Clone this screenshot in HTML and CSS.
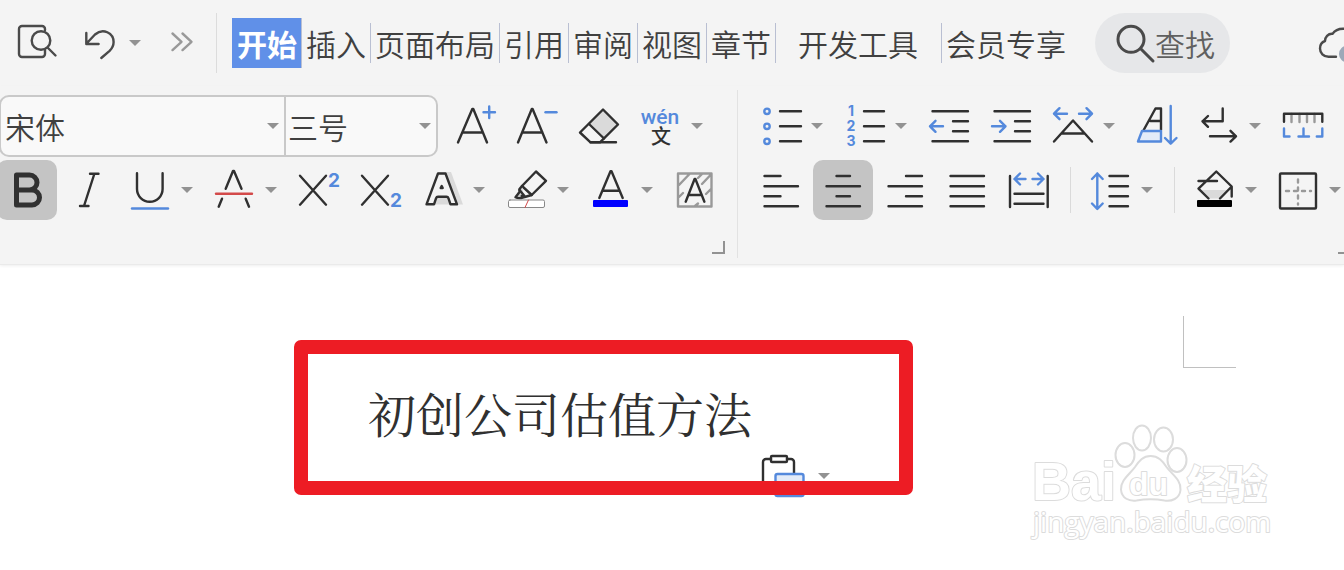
FILE: index.html
```html
<!DOCTYPE html>
<html lang="zh-CN">
<head>
  <meta charset="UTF-8" />
  <meta name="viewport" content="width=device-width, initial-scale=1.0" />
  <title>初创公司估值方法</title>
  <link rel="stylesheet" href="styles.css">
</head>
<body>
  <header class="topbar">
    <button class="tool" aria-label="打印预览">
      <svg class="icon" viewBox="0 0 40 40"><path d="M28 7V6a3 3 0 0 0-3-3H5a3 3 0 0 0-3 3v25a3 3 0 0 0 3 3h20a3 3 0 0 0 3-3v-4"/><circle cx="24" cy="17.5" r="9.3"/><path d="M31 25l7.500 7.500"/></svg>
    </button>
    <button class="tool has-caret" aria-label="撤销">
      <svg class="icon" viewBox="0 0 40 40"><path d="M7.300 10v11h12.300M7.500 20.500L16 11.500C24 4.500 34.600 10 34.600 19c0 4-1.600 6.500-4 8.800L22.300 35"/></svg>
      <span class="caret"></span>
    </button>
    <button class="tool muted" aria-label="更多">
      <svg class="icon" viewBox="0 0 40 40"><path d="M9.500 10.500l9 8.300-9 8.300M19.500 10.500l9 8.300-9 8.300"/></svg>
    </button>
    <nav class="tabs">
      <a href="#" class="active">开始</a>
      <a href="#">插入</a>
      <a href="#">页面布局</a>
      <a href="#">引用</a>
      <a href="#">审阅</a>
      <a href="#">视图</a>
      <a href="#">章节</a>
      <a href="#" class="wide">开发工具</a>
      <a href="#" class="last">会员专享</a>
    </nav>
    <label class="search">
      <svg class="icon" viewBox="0 0 40 40"><g stroke-width="3"><circle cx="16" cy="16.300" r="13"/><path d="M26 26l12 12"/></g></svg>
      <input type="text" placeholder="查找" aria-label="查找">
    </label>
    <button class="cloud" aria-label="云同步">
      <svg class="icon" viewBox="0 0 40 40"><path d="M17 33.700H9.500C4.500 33.700 1 30 1 25.500c0-3.500 2-6.500 5-7.500 0-4 3-7.500 7.500-7.200C16 7 20.500 5.500 25 5.700"/><circle class="dot" cx="28.500" cy="31" r="8.500"/></svg>
    </button>
  </header>

  <div class="ribbon">
    <section class="group font-group">
      <div class="row">
        <div class="fields">
          <div class="field field-font">
            <select aria-label="字体"><option>宋体</option><option>黑体</option></select>
            <span class="caret"></span>
          </div>
          <div class="field field-size">
            <select aria-label="字号"><option>三号</option><option>四号</option></select>
            <span class="caret"></span>
          </div>
        </div>
        <button class="tool" aria-label="增大字号">
          <svg class="icon" viewBox="0 0 40 40"><path d="M3 36.500L17.300 3h1L32 36.500M7.500 26.500h20"/><path class="blue" d="M28.500 6.300h11.500M34.200.500v11.500"/></svg>
        </button>
        <button class="tool" aria-label="减小字号">
          <svg class="icon" viewBox="0 0 40 40"><path d="M1 36.500L14.800 3h.800L29.500 36.500M5.500 26.500h20"/><path class="blue" d="M28.500 6.300H39.500"/></svg>
        </button>
        <button class="tool" aria-label="清除格式">
          <svg class="icon" viewBox="0 0 40 40"><path class="tint" d="M24 3.500l15 15L25 33 10 18z"/><path d="M24 3.500l15 15L21 36.300H11.500L1 26.500z"/><path d="M10 18l15 14.500M11.500 36.300H37"/></svg>
        </button>
        <button class="tool has-caret" aria-label="拼音指南">
          <svg class="icon" viewBox="0 0 40 40"><text class="pinyin" x="19" y="18">wén</text><text class="hanzi" x="20" y="38">文</text></svg>
          <span class="caret"></span>
        </button>
      </div>
      <div class="row row-format">
        <button class="tool pressed" aria-label="加粗">
          <svg class="icon" viewBox="0 0 40 40"><path stroke-width="5" d="M9.500 5H22.500a7.500 7.500 0 0 1 0 15H9.500zM9.500 20H25a7.500 7.500 0 0 1 0 15H9.500z"/></svg>
        </button>
        <button class="tool" aria-label="倾斜">
          <svg class="icon" viewBox="0 0 40 40"><path d="M21 3.700h8.500M11 36h8.500M25.300 4L15 36"/></svg>
        </button>
        <button class="tool has-caret" aria-label="下划线">
          <svg class="icon" viewBox="0 0 40 40"><path d="M6 3.300v15.700a12.800 12.800 0 0 0 25.600 0V3.300"/><path class="blue" d="M1 38.500h36"/></svg>
          <span class="caret"></span>
        </button>
        <button class="tool has-caret" aria-label="删除线">
          <svg class="icon" viewBox="0 0 40 40"><path d="M10.700 18.800L18 1h1l7.500 17.800M7 28.700l-3.300 8M30.700 28.700l3.300 8"/><path class="red" d="M1 23.700h36"/></svg>
          <span class="caret"></span>
        </button>
        <button class="tool" aria-label="上标">
          <svg class="icon" viewBox="0 0 40 40"><path d="M1 5.700l26 29M27 5.700l-26 29"/><text class="script" x="35" y="17">2</text></svg>
        </button>
        <button class="tool" aria-label="下标">
          <svg class="icon" viewBox="0 0 40 40"><path d="M1 5.700l26 29M27 5.700l-26 29"/><text class="script" x="35" y="37">2</text></svg>
        </button>
        <button class="tool has-caret" aria-label="文字效果">
          <svg class="icon" viewBox="0 0 40 40"><path class="tint" d="M15 2h13l12 32.500H11z"/><path class="paper" d="M3.500 34.300L15 3.500h7.500L34 34.300H27.500l-2-6q-.500-1.500-2-1.500h-8.500q-1.500 0-2 1.500l-2 6z"/><path d="M18.700 16l1 2h-2z"/></svg>
          <span class="caret"></span>
        </button>
        <button class="tool has-caret" aria-label="突出显示">
          <svg class="icon" viewBox="0 0 40 40"><path d="M29 1.500l10 9.300L24.700 25 15 16z"/><path class="shade" d="M15 16l-2.500 3v3l-4 5.300c2 1 5 1 8 0"/><path d="M12.500 20l5 6M24.700 25l-7 2-3-1"/><rect class="swatch" x="1.500" y="30" width="36" height="7.500" rx="1.500"/><path class="red thin" d="M21.500 30l-3.500 7.500"/></svg>
          <span class="caret"></span>
        </button>
        <button class="tool has-caret" aria-label="字体颜色">
          <svg class="icon" viewBox="0 0 40 40"><path d="M8.300 28L19.500 1.300h1L31.700 28M12 20.700h16"/><rect class="bar-blue" x="2" y="30" width="35" height="7" rx="1"/></svg>
          <span class="caret"></span>
        </button>
        <button class="tool" aria-label="字符底纹">
          <svg class="icon" viewBox="0 0 40 40"><path class="gray" d="M3 3.500h33.500v33H3zM4 15L14.500 4M4 27l4-4M23 8l4-4M27 14l9-9.500M31 24l5-5M20 36l3-2.500"/><path d="M10.700 31.700L19.600 9h.800l9 22.700M14 25h12"/></svg>
        </button>
      </div>
      <div class="group-foot"><button class="launcher" aria-label="字体设置"></button></div>
    </section>

    <section class="group para-group">
      <div class="row">
        <button class="tool has-caret" aria-label="项目符号">
          <svg class="icon" viewBox="0 0 40 40"><g class="blue"><circle cx="6" cy="5.300" r="2.700"/><circle cx="6" cy="20.300" r="2.700"/><circle cx="6" cy="35.300" r="2.700"/></g><path d="M19 5.300h21M19 20.300h21M19 35.300h21"/></svg>
          <span class="caret"></span>
        </button>
        <button class="tool has-caret" aria-label="编号">
          <svg class="icon" viewBox="0 0 40 40"><g class="digits"><text x="6" y="10">1</text><text x="6" y="25">2</text><text x="6" y="40">3</text></g><path d="M19 5.300h20M19 20.300h20M19 35.300h20"/></svg>
          <span class="caret"></span>
        </button>
        <button class="tool" aria-label="减少缩进">
          <svg class="icon" viewBox="0 0 40 40"><path d="M3.500 5.300H39M24 15.300h15M24 25.300h15M3.500 35.300H39"/><path class="blue" d="M14 20.300H1M6.500 14.800L1 20.300l5.500 5.500"/></svg>
        </button>
        <button class="tool" aria-label="增加缩进">
          <svg class="icon" viewBox="0 0 40 40"><path d="M3.500 5.300H39M24 15.300h15M24 25.300h15M3.500 35.300H39"/><path class="blue" d="M1 20.300h13.500M9 14.800l5.500 5.500L9 25.800"/></svg>
        </button>
        <button class="tool has-caret" aria-label="字符缩放">
          <svg class="icon" viewBox="0 0 40 40"><path d="M1 35.500L20 14.500l19 21M9 27.500h22"/><path class="blue" d="M14 7.700H1M6.500 2.200L1 7.700l5.500 5.500M26 7.700h13M33.500 2.200L39 7.700l-5.500 5.500"/></svg>
          <span class="caret"></span>
        </button>
        <button class="tool" aria-label="排序">
          <svg class="icon" viewBox="0 0 40 40"><path d="M6.700 24L18.500 2.500H24V24M13.500 15H24"/><path class="blue pale" d="M5 25h19v10.500H1z"/><path class="blue" d="M33.700 0v37.500M28 32l5.700 5.700L39.500 32"/></svg>
        </button>
        <button class="tool has-caret" aria-label="显示段落标记">
          <svg class="icon" viewBox="0 0 40 40"><path d="M23.700 2.500v12.800H3.500M9 10l-5.500 5.300L9 20.800M11 30.300h26M31.500 24.800l5.500 5.500-5.500 5.300"/></svg>
          <span class="caret"></span>
        </button>
        <button class="tool" aria-label="制表位">
          <svg class="icon" viewBox="0 0 40 40"><path class="gray" d="M8.500 8v8M16.500 8v8M24 8v8M31.500 8v8"/><path d="M1 15.700v-8h38.300v8"/><path class="blue" d="M1 22.500v8h5.500M20.500 22.500v8M15.500 30.500h10.500M39.300 22.500v8h-5.500"/></svg>
        </button>
      </div>
      <div class="row">
        <button class="tool" aria-label="左对齐">
          <svg class="icon" viewBox="0 0 40 40"><path d="M3.500 6h16M3.500 16.300h33.500M3.500 26.300h16M3.500 36.300h33.500"/></svg>
        </button>
        <button class="tool pressed" aria-label="居中对齐">
          <svg class="icon" viewBox="0 0 40 40"><path d="M13.500 6h13.500M3.500 16.300h33.500M13.500 26.300h13.500M3.500 36.300h33.500"/></svg>
        </button>
        <button class="tool" aria-label="右对齐">
          <svg class="icon" viewBox="0 0 40 40"><path d="M21 6h16M3.500 16.300h33.500M21 26.300h16M3.500 36.300h33.500"/></svg>
        </button>
        <button class="tool" aria-label="两端对齐">
          <svg class="icon" viewBox="0 0 40 40"><path d="M3.500 6h33.500M3.500 16.300h33.500M3.500 26.300h33.500M3.500 36.300h33.500"/></svg>
        </button>
        <button class="tool" aria-label="分散对齐">
          <svg class="icon" viewBox="0 0 40 40"><path d="M1 6v31M38.700 6v31M5.500 23.700h29M5.500 33.700h29"/><path class="blue" d="M16.500 9h-11M11 3.500L5.500 9l5.500 5.500M23.500 9h11M29 3.500L34.500 9 29 14.500"/></svg>
        </button>
        <span class="sep"></span>
        <button class="tool has-caret" aria-label="行距">
          <svg class="icon" viewBox="0 0 40 40"><path class="blue" d="M6.300 3.500v35M1 9l5.300-5.500L11.700 9M1 33.500L6.300 39l5.400-5.500"/><path d="M18.500 6H37M18.500 16.300H37M18.500 26.300H37M18.500 36.300H37"/></svg>
          <span class="caret"></span>
        </button>
        <span class="sep"></span>
        <button class="tool has-caret" aria-label="底纹颜色">
          <svg class="icon" viewBox="0 0 40 40"><path class="tint" d="M5 20h28l-9 8.500H13z"/><path d="M13.500 28.500L3.500 18.700 21.300 1.500l15.400 15v10M36.700 16.500L25 28.500M3.500 11H22"/><rect class="bar-black" x="2" y="30" width="35" height="7" rx="1"/></svg>
          <span class="caret"></span>
        </button>
        <button class="tool has-caret" aria-label="边框">
          <svg class="icon" viewBox="0 0 40 40"><rect x="1" y="3.500" width="36" height="35" rx="1"/><path class="gray" stroke-dasharray="3 5" d="M7 21H32"/><path class="gray" stroke-dasharray="3 5" d="M19 9.500v25"/></svg>
          <span class="caret"></span>
        </button>
      </div>
      <div class="group-foot"><button class="launcher" aria-label="段落设置"></button></div>
    </section>
  </div>

  <main class="document">
    <h1>初创公司估值方法</h1>
    <button class="paste" aria-label="粘贴选项">
      <svg class="paste-icon" viewBox="0 0 42 42"><path d="M9 4H4a3 3 0 0 0-3 3v24h12M25 4h4a3 3 0 0 1 3 3v12"/><rect x="9" y="1" width="16" height="6" rx="1"/><rect class="blue pale" x="13.500" y="19" width="28" height="22" rx="2"/></svg>
      <span class="caret"></span>
    </button>
    <div class="highlight-frame"></div>
    <div class="crop-mark"></div>
    <svg class="watermark" viewBox="0 0 250 122">
      <g class="paw">
        <ellipse cx="97" cy="35" rx="9.500" ry="12"/>
        <ellipse cx="114" cy="18" rx="9" ry="12.500"/>
        <ellipse cx="135.500" cy="19.500" rx="9.500" ry="12"/>
        <ellipse cx="149" cy="40" rx="9.500" ry="12"/>
        <path d="M122.500 36c8 0 12 5 16 11 5 7 15 13 14 23-1 9-9 11.500-16 10.500-9-1.500-19-1.500-28 0-7 1-15-2-15.500-11C92.500 60 102 54 107 47c4-6 8-11 15.500-11z"/>
      </g>
      <text class="mark-bai" x="4" y="80">Bai</text>
      <text class="mark-du" x="101" y="75">du</text>
      <text class="mark-cn" x="159" y="79">经验</text>
      <text class="mark-url" x="5" y="112">jingyan.baidu.com</text>
    </svg>
  </main>
</body>
</html>
```
FILE: styles.css
```css
* {
  box-sizing: border-box;
}
body {
  margin: 0;
  min-height: 100vh;
  display: flex;
  flex-direction: column;
  overflow: hidden;
  background: #fff;
  color: #404040;
  font-family: "Noto Sans CJK SC", sans-serif;
  font-size: 30px;
  font-weight: 350;
}
button, input, select {
  font: inherit;
  color: inherit;
  border: none;
  background: none;
  padding: 0;
  margin: 0;
}
button {
  cursor: pointer;
}

/* Icons */
.icon {
  flex: none;
  width: 40px;
  height: 40px;
}
.icon, .paste-icon, .watermark {
  display: block;
  overflow: visible;
}
.icon, .paste-icon {
  fill: none;
  stroke: #303030;
  stroke-width: 2.4;
  stroke-linecap: round;
  stroke-linejoin: round;
}
.topbar .icon {
  stroke: #4a4a4a;
}
.topbar .muted .icon {
  stroke: #999;
}
.icon .blue, .paste-icon .blue {
  stroke: #5489dc;
}
.icon .red {
  stroke: #d34a4a;
}
.icon .gray {
  stroke: #999;
}
.icon .thin {
  stroke-width: 1;
}
.icon .tint {
  fill: #dadada;
  stroke: none;
}
.icon .shade {
  fill: #ccc;
}
.icon .paper {
  fill: #f3f3f3;
}
.icon .pale, .paste-icon .pale {
  fill: #e3ebf8;
}
.icon .swatch {
  fill: #fff;
  stroke: #888;
  stroke-width: 1;
}
.icon .bar-blue {
  fill: #00f;
  stroke: none;
}
.icon .bar-black {
  fill: #000;
  stroke: none;
}
.icon .dot {
  fill: #9ca8b8;
  stroke: none;
}
.icon text {
  stroke: none;
  text-anchor: middle;
  fill: #5489dc;
}
.icon .pinyin {
  font: 500 21px Roboto, sans-serif;
}
.icon .hanzi {
  fill: #303030;
  font-size: 20px;
  font-weight: 500;
}
.icon .script {
  font: 700 19px Inter, sans-serif;
}
.icon .digits {
  font: 700 14px Inter, sans-serif;
}
.caret {
  flex: none;
  width: 12px;
  height: 6px;
  background: #929292;
  clip-path: polygon(0 0, 100% 0, 50% 100%);
}

/* Buttons */
.tool {
  flex: none;
  display: flex;
  align-items: center;
  gap: 10px;
  height: 60px;
  padding: 0 10px;
  border-radius: 10px;
}
.tool:hover {
  background: #e4e4e4;
}
.tool.pressed {
  background: #c4c4c4;
}

/* Top bar */
.topbar {
  display: flex;
  align-items: center;
  gap: 2px;
  height: 86px;
  padding-left: 7px;
  background: #f4f4f4;
}
.tabs {
  flex: none;
  display: flex;
  align-items: center;
  height: 60px;
  margin-left: 1px;
  padding-left: 15px;
  border-left: 1px solid #dcdcdc;
}
.tabs a {
  height: 40px;
  padding: 0 4px;
  border-right: 1px solid #b9bfd2;
  color: #404040;
  line-height: 40px;
  text-decoration: none;
  white-space: nowrap;
}
.tabs a.active {
  height: 50px;
  padding-left: 5px;
  background: #6090e8;
  color: #fff;
  font-weight: 700;
  line-height: 50px;
}
.tabs a.wide {
  padding: 0 23px 0 22px;
}
.tabs a.last {
  border-right: none;
}
.search {
  flex: none;
  display: flex;
  align-items: center;
  width: 135px;
  height: 60px;
  margin-left: 23px;
  padding: 0 15px 0 20px;
  border-radius: 30px;
  background: #e6e7e9;
}
.search input {
  width: 60px;
  height: 40px;
  outline: none;
}
.search input::placeholder {
  color: #606060;
  opacity: 1;
}
.cloud {
  flex: none;
  width: 25px;
  margin-left: auto;
}

/* Ribbon */
.ribbon {
  display: flex;
  padding: 4px 0 6px;
  overflow: hidden;
  background: #f4f4f4;
  border-bottom: 1px solid #eaeaea;
  box-shadow: 0 1px 3px #eee;
}
.group {
  flex: none;
  display: flex;
  flex-direction: column;
  gap: 4px;
  padding: 6px 12px 4px 0;
}
.font-group {
  border-right: 1px solid #e2e2e2;
}
.para-group {
  padding-left: 13px;
}
.row {
  display: flex;
  align-items: center;
  gap: 2px;
}
.row-format {
  margin-left: -3px;
}
.fields {
  display: flex;
  height: 62px;
  margin: -1px 5px -1px -1px;
  border: 2px solid #c9c9c9;
  border-radius: 10px;
  background: #f9f9f9;
  overflow: hidden;
}
.field {
  position: relative;
  display: flex;
  align-items: center;
}
.field-font {
  width: 285px;
  border-right: 2px solid #c9c9c9;
}
.field-size {
  width: 150px;
}
.field select {
  appearance: none;
  width: 100%;
  height: 58px;
  padding-left: 4px;
  outline: none;
}
.field-size select {
  padding-left: 2px;
}
.field .caret {
  position: absolute;
  right: 5px;
  pointer-events: none;
}
.sep {
  width: 18px;
  height: 46px;
  background: linear-gradient(#dadada, #dadada) center / 1px 100% no-repeat;
}
.group-foot {
  display: flex;
  justify-content: flex-end;
  margin-top: 17px;
}
.launcher {
  width: 13px;
  height: 13px;
  background:
    linear-gradient(#929292, #929292) right / 2px 100% no-repeat,
    linear-gradient(#929292, #929292) bottom / 100% 2px no-repeat;
}

/* Document */
.document {
  position: relative;
  flex: 1;
  padding-top: 114px;
}
.document h1 {
  margin: 0 0 0 368px;
  color: #303030;
  font-family: "Noto Serif CJK SC", SimSun, "Noto Sans CJK SC", serif;
  font-size: 48px;
  font-weight: 400;
  line-height: 68px;
}
.paste {
  position: absolute;
  top: 190px;
  left: 762px;
  display: flex;
  align-items: center;
  gap: 14px;
}
.paste-icon {
  width: 42px;
  height: 42px;
}
.highlight-frame {
  position: absolute;
  top: 75px;
  left: 294px;
  width: 619px;
  height: 155px;
  border: 14px solid #ed1c24;
  border-radius: 7px;
  pointer-events: none;
}
.crop-mark {
  position: absolute;
  top: 51px;
  right: 108px;
  width: 53px;
  height: 52px;
  border: solid #c0c0c0;
  border-width: 0 0 1px 1px;
}

/* Watermark */
.watermark {
  position: absolute;
  right: 66px;
  bottom: 28px;
  width: 250px;
  height: 122px;
  fill: #fff;
  stroke: #dcdcdc;
  stroke-width: 2;
  stroke-linejoin: round;
}
.watermark text {
  paint-order: stroke;
}
.mark-bai {
  font: 700 54px "Liberation Sans", sans-serif;
}
.mark-du {
  font: 700 32px "Liberation Sans", sans-serif;
}
.mark-cn {
  font-size: 40px;
  font-weight: 900;
}
.mark-url {
  font: 400 28px "Open Sans", sans-serif;
}
```
